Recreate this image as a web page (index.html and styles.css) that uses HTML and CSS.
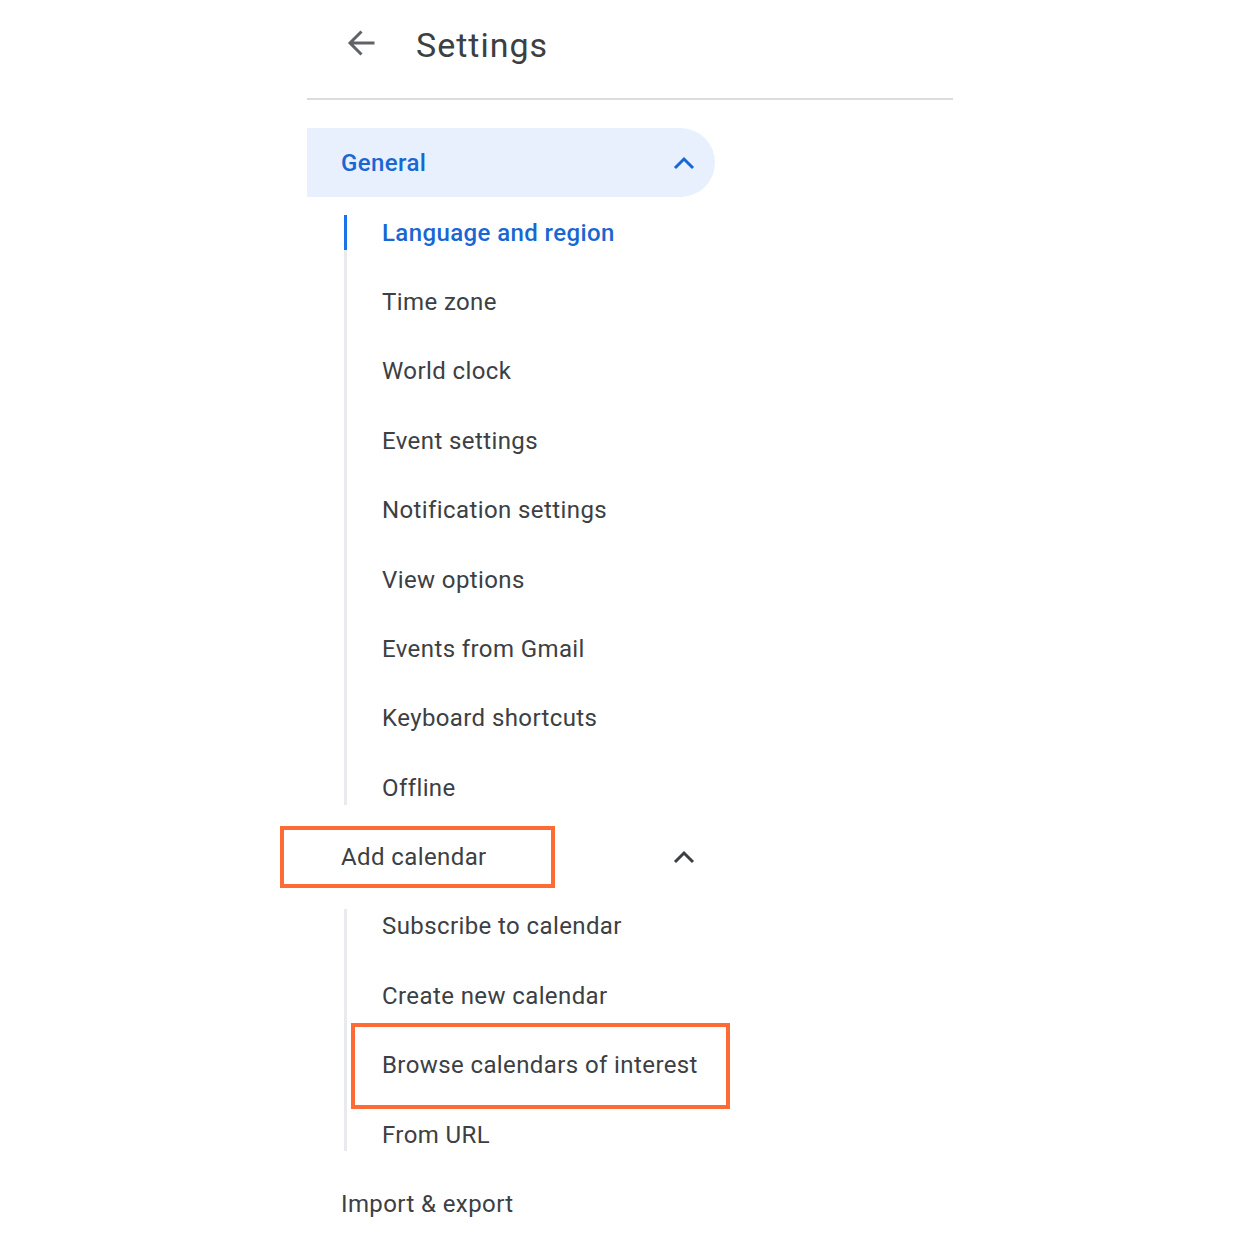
FILE: index.html
```html
<!DOCTYPE html>
<html>
<head>
<meta charset="utf-8">
<link rel="stylesheet" href="styles.css">
</head>
<body>
<div class="page">
  <header class="header">
    <svg class="back" width="30" height="30" viewBox="0 0 30 30"><path d="M28.5 15H4.5M15.5 3.5L4 15l11.5 11.5" fill="none" stroke="#5f6368" stroke-width="3"/></svg>
    <h1 class="title">Settings</h1>
  </header>
  <nav class="nav">
    <div class="group-head active">
      <span>General</span>
      <svg class="chev" width="24" height="16" viewBox="0 0 24 16"><path d="M3 13L12 4l9 9" fill="none" stroke="currentColor" stroke-width="3"/></svg>
    </div>
    <div class="sub">
      <ul class="sub-list">
        <li class="item current">Language and region</li>
        <li class="item">Time zone</li>
        <li class="item">World clock</li>
        <li class="item">Event settings</li>
        <li class="item">Notification settings</li>
        <li class="item">View options</li>
        <li class="item">Events from Gmail</li>
        <li class="item">Keyboard shortcuts</li>
        <li class="item">Offline</li>
      </ul>
    </div>
    <div class="group-head marked">
      <span>Add calendar</span>
      <svg class="chev" width="24" height="16" viewBox="0 0 24 16"><path d="M3 13L12 4l9 9" fill="none" stroke="currentColor" stroke-width="3"/></svg>
    </div>
    <div class="sub">
      <ul class="sub-list">
        <li class="item">Subscribe to calendar</li>
        <li class="item">Create new calendar</li>
        <li class="item marked">Browse calendars of interest</li>
        <li class="item">From URL</li>
      </ul>
    </div>
    <div class="group-head plain">
      <span>Import &amp; export</span>
    </div>
  </nav>
</div>
</body>
</html>
```
FILE: styles.css
```css
html, body {
  margin: 0;
  padding: 0;
  background: #fff;
}
body {
  font-family: Roboto, "Liberation Sans", Arial, sans-serif;
  color: #3c4043;
}
.page {
  width: 646px;
  margin-left: 307px;
}
.header {
  height: 98px;
  display: flex;
  align-items: center;
  border-bottom: 2px solid #dadce0;
}
.back {
  margin-left: 39px;
  margin-top: -12px;
}
.title {
  margin: -8px 0 0 40px;
  font-weight: 400;
  font-size: 34px;
  color: #3c4043;
  letter-spacing: 1px;
}
.nav {
  margin-top: 28px;
}
.group-head {
  position: relative;
  height: 69.4px;
  width: 408px;
  box-sizing: border-box;
  display: flex;
  align-items: center;
  justify-content: space-between;
  padding: 1px 19px 0 34px;
  font-size: 24px;
  letter-spacing: 0.4px;
  color: #3c4043;
}
.group-head.active {
  background: #e8f0fe;
  border-radius: 0 35px 35px 0;
  color: #1967d2;
  font-weight: 500;
}
.chev {
  color: #3c4043;
}
.active .chev {
  color: #1967d2;
}
.sub {
  display: flow-root;
  margin: 17.4px 0 17.4px 37px;
  border-left: 3px solid #e8eaed;
}
.sub-list {
  list-style: none;
  margin: -17.4px 0;
  padding: 0;
}
.item {
  position: relative;
  height: 69.4px;
  box-sizing: border-box;
  display: flex;
  align-items: center;
  padding: 1px 0 0 35px;
  font-size: 24px;
  letter-spacing: 0.4px;
  color: #3c4043;
}
.item.current {
  color: #1967d2;
  font-weight: 500;
}
.item.current::before {
  content: "";
  position: absolute;
  left: -3px;
  top: 17.6px;
  width: 3px;
  height: 34.6px;
  background: #1a73e8;
}
.group-head.marked::after {
  content: "";
  position: absolute;
  left: -27px;
  top: 4px;
  width: 275px;
  height: 62px;
  box-sizing: border-box;
  border: 4px solid #ff6b35;
}
.item.marked::after {
  content: "";
  position: absolute;
  left: 4px;
  top: -7px;
  width: 379px;
  height: 86px;
  box-sizing: border-box;
  border: 4px solid #ff6b35;
}
```
